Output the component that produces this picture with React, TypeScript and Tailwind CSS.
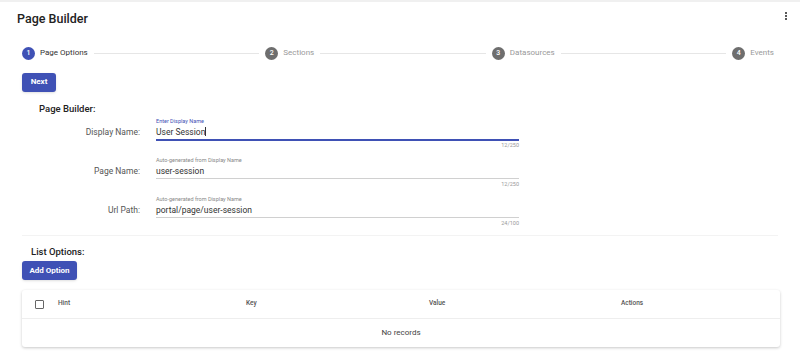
const font = { fontFamily: "Roboto, 'Liberation Sans', sans-serif" };

type FieldProps = {
  label: string;
  helper: string;
  value: string;
  count: string;
  focused?: boolean;
};

function Field({ label, helper, value, count, focused }: FieldProps) {
  return (
    <div className="flex">
      <div className="w-[118px] pt-[8px] text-right text-[8.5px] leading-[14px] text-[#555]">{label}</div>
      <div className="ml-[16px] w-[363px]">
        <div className={`text-[5.5px] leading-[8px] ${focused ? "text-[#3f51b5]" : "text-[#888]"}`}>{helper}</div>
        <div
          className={`text-[8.5px] leading-[14px] text-[#333] ${
            focused ? "h-[16px] border-b-2 border-[#3f51b5]" : "h-[15px] border-b border-[#d0d0d0]"
          }`}
        >
          {value}
          {focused && <span className="inline-block w-[1px] h-[9px] bg-[#333] align-middle -mt-[2px]" />}
        </div>
        <div className={`text-right text-[5.5px] leading-[9px] text-[#999] ${focused ? "" : "pt-[1px]"}`}>{count}</div>
      </div>
    </div>
  );
}

function Step({ n, label, active }: { n: number; label: string; active?: boolean }) {
  return (
    <div className="flex items-center gap-[5px] shrink-0">
      <div
        className={`flex h-[13px] w-[13px] items-center justify-center rounded-full text-[7px] font-medium text-white ${
          active ? "bg-[#3f51b5]" : "bg-[#6e6e6e]"
        }`}
      >
        {n}
      </div>
      <span className={`text-[8px] ${active ? "text-[#333]" : "text-[#999]"}`}>{label}</span>
    </div>
  );
}

function Line() {
  return <div className="mx-[6px] h-px flex-1 bg-[#e6e6e6]" />;
}

export default function App() {
  return (
    <div className="h-[358px] w-[800px] overflow-hidden border-t-2 border-[#f0f0f0] bg-white" style={font}>
      <div className="flex items-center justify-between pl-[17px] pr-[13px] pt-[8px]">
        <h1 className="text-[12.5px] font-medium text-[#222]">Page Builder</h1>
        <div className="flex flex-col gap-[1px] pb-[6px]">
          <span className="block h-[2px] w-[2px] rounded-full bg-[#222]" />
          <span className="block h-[2px] w-[2px] rounded-full bg-[#222]" />
          <span className="block h-[2px] w-[2px] rounded-full bg-[#222]" />
        </div>
      </div>

      <div className="px-[22px]">
        <div className="mt-[18px] flex items-center pr-[4px]">
          <Step n={1} label="Page Options" active />
          <Line />
          <Step n={2} label="Sections" />
          <Line />
          <Step n={3} label="Datasources" />
          <Line />
          <Step n={4} label="Events" />
        </div>

        <button className="mt-[13px] block h-[19px] w-[34px] rounded-[3px] bg-[#3f51b5] text-[8px] font-bold text-white shadow-sm">
          Next
        </button>

        <div className="mt-[10px] pl-[17px] text-[9.5px] font-medium text-[#222]">Page Builder:</div>

        <div className="mt-[1px] flex flex-col gap-[6px]">
          <Field label="Display Name:" helper="Enter Display Name" value="User Session" count="12/250" focused />
          <Field label="Page Name:" helper="Auto-generated from Display Name" value="user-session" count="12/250" />
          <Field label="Url Path:" helper="Auto-generated from Display Name" value="portal/page/user-session" count="24/100" />
        </div>

        <div className="mt-[7px] h-px w-[756px] bg-[#f3f3f3]" />

        <div className="mt-[9px] pl-[9px] text-[9.5px] font-medium text-[#222]">List Options:</div>

        <button className="mt-[2px] block h-[19px] w-[55px] rounded-[3px] bg-[#3f51b5] text-[8px] font-bold text-white shadow-sm">
          Add Option
        </button>

        <div className="mt-[10px] w-[758px] rounded-[3px] bg-white shadow-[0_1px_3px_rgba(0,0,0,0.22)]">
          <div className="flex h-[29px] items-center border-b border-[#eee] text-[6.5px] font-medium text-[#555]">
            <div className="ml-[13px] h-[9px] w-[9px] rounded-[1px] border-[1.5px] border-[#666]" />
            <div className="ml-[14px] w-[188px]">Hint</div>
            <div className="w-[183px]">Key</div>
            <div className="w-[192px]">Value</div>
            <div>Actions</div>
          </div>
          <div className="flex h-[28px] items-center justify-center text-[8px] text-[#444]">No records</div>
        </div>
      </div>
    </div>
  );
}
